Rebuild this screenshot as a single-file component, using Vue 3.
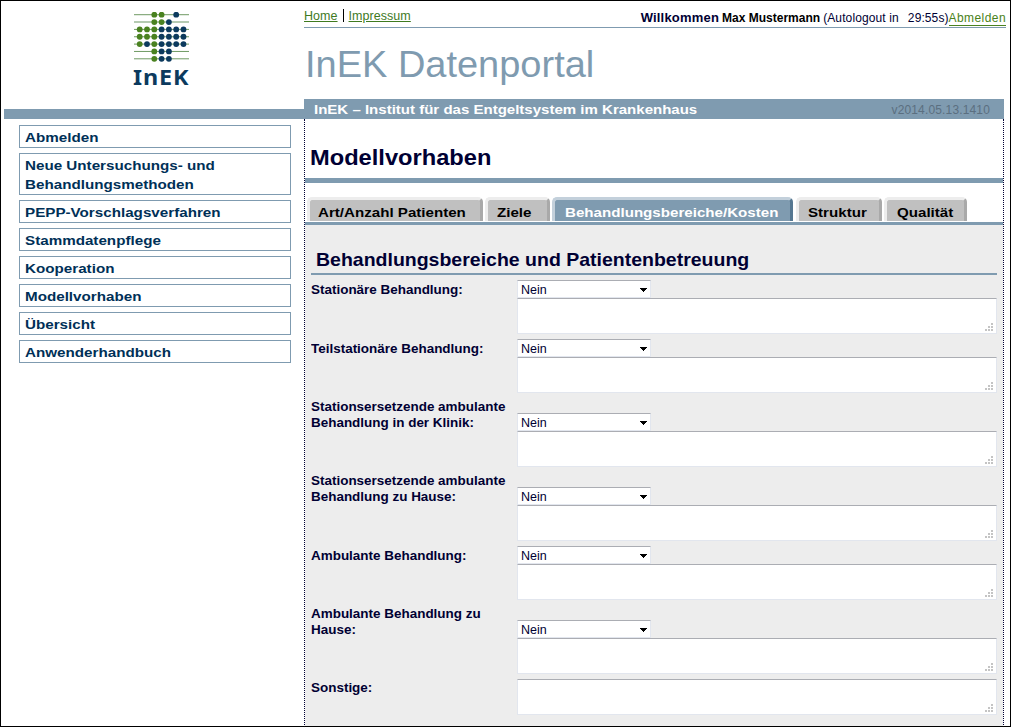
<script setup>
const menu = ['Abmelden', 'Neue Untersuchungs- und Behandlungsmethoden', 'PEPP-Vorschlagsverfahren', 'Stammdatenpflege', 'Kooperation', 'Modellvorhaben', 'Übersicht', 'Anwenderhandbuch']
const tabs = [
  { label: 'Art/Anzahl Patienten', cls: 't1' },
  { label: 'Ziele', cls: 't2' },
  { label: 'Behandlungsbereiche/Kosten', cls: 't3 active' },
  { label: 'Struktur', cls: 't4' },
  { label: 'Qualität', cls: 't5' }
]
const rows = [
  { lines: ['Stationäre Behandlung:'], select: true },
  { lines: ['Teilstationäre Behandlung:'], select: true },
  { lines: ['Stationsersetzende ambulante', 'Behandlung in der Klinik:'], select: true },
  { lines: ['Stationsersetzende ambulante', 'Behandlung zu Hause:'], select: true },
  { lines: ['Ambulante Behandlung:'], select: true },
  { lines: ['Ambulante Behandlung zu', 'Hause:'], select: true },
  { lines: ['Sonstige:'], select: false }
]
// g = green bead, b = blue bead, . = empty place on the line
const beads = ['..gg.b.', '..ggb..', 'gggbbbb', 'gggbbbb', 'gbgbbbb', '..gbb..', '..gbb..']
const grip = [[6, 0], [3, 3], [6, 3], [0, 6], [3, 6], [6, 6]]
</script>

<template>
  <div class="page">
    <aside class="side">
      <div class="logo">
        <svg width="56" height="50" viewBox="0 0 56 50">
          <g v-for="(row, r) in beads" :key="r">
            <rect x="0" :y="r === 1 ? 9 : 2.2 + r * 7.35" width="55" :height="r === 1 ? 2 : 1" :fill="r === 1 ? '#b5cbb2' : '#6f9a63'" />
            <template v-for="(c, i) in row" :key="i">
              <circle v-if="c !== '.'" :cx="5.7 + i * 7.3" :cy="2.7 + r * 7.35" r="2.9" :fill="c === 'g' ? '#4a8220' : '#0c3a5e'" />
            </template>
          </g>
        </svg>
        <span class="word">InEK</span>
      </div>
      <div class="bar"></div>
      <nav class="menu">
        <a v-for="m in menu" :key="m"><span class="wide">{{ m }}</span></a>
      </nav>
    </aside>

    <main class="main">
      <header class="top">
        <div class="links"><a>Home</a><i></i><a>Impressum</a></div>
        <div class="user"><b class="wel">Willkommen</b><b class="name">Max Mustermann</b><span class="auto">(Autologout in</span><span class="time">29:55s)</span><a class="out">Abmelden</a></div>
      </header>
      <div class="title"><span class="wide">InEK Datenportal</span></div>
      <div class="banner"><b class="wide">InEK – Institut für das Entgeltsystem im Krankenhaus</b><span class="version">v2014.05.13.1410</span></div>
      <section class="content">
        <h1><span class="wide">Modellvorhaben</span></h1>
        <div class="tabs">
          <div v-for="t in tabs" :key="t.label" class="tab" :class="t.cls"><span class="wide">{{ t.label }}</span></div>
        </div>
        <div class="panel">
          <h2><span class="wide">Behandlungsbereiche und Patientenbetreuung</span></h2>
          <div v-for="(r, k) in rows" :key="k" class="row">
            <div class="label" :class="{ single: r.select && r.lines.length === 1 }"><div v-for="l in r.lines" :key="l"><span class="wide">{{ l }}</span></div></div>
            <div class="fields" :class="{ low: r.lines.length > 1 }">
              <div v-if="r.select" class="select"><span>Nein</span>
                <svg width="7" height="4" viewBox="0 0 7 4" shape-rendering="crispEdges"><path d="M0 0H7V1H6V2H5V3H4V4H3V3H2V2H1V1H0Z" fill="#000" /></svg>
              </div>
              <div class="area">
                <svg width="8" height="8" viewBox="0 0 8 8" shape-rendering="crispEdges"><rect v-for="(g, i) in grip" :key="i" :x="g[0]" :y="g[1]" width="2" height="2" fill="#c4c4c4" /></svg>
              </div>
            </div>
          </div>
        </div>
      </section>
    </main>
  </div>
</template>

<style>
body { margin: 0; background: #fff; overflow: hidden; }
</style>

<style scoped>
* { box-sizing: border-box; }
.page { width: 1011px; height: 727px; border: 1px solid #000; display: flex; padding-left: 3px; overflow: hidden; font-family: "Liberation Sans", Arial, sans-serif; color: #000033; background: #fff; white-space: nowrap; }
.wide { display: block; width: max-content; transform-origin: 0 50%; }
.side { width: 300px; flex: none; }
.logo { height: 108px; padding: 11px 0 0 130px; }
.logo svg { display: block; }
.word { display: block; width: max-content; font: bold 20.5px/24px "Noto Sans", "Open Sans", sans-serif; color: #0c3a5e; margin: 3px 0 0 -1px; letter-spacing: .8px; transform: scaleX(1.14); transform-origin: 0 50%; }
.bar { height: 10px; background: #7f9bb0; }
.menu { display: flex; flex-direction: column; gap: 5px; margin: 6px 13px 0 15px; }
.menu a { border: 1px solid #7f9bb0; padding: 2px 5px 0; font-size: 13.5px; line-height: 19px; font-weight: bold; color: #003057; }
.menu .wide { max-width: 185px; white-space: normal; transform: scaleX(1.125); }
.main { width: 702px; flex: none; }
.top { height: 27px; border-bottom: 1px solid #7f9bb0; display: flex; justify-content: space-between; font-size: 12px; }
.links { display: flex; padding-top: 8px; line-height: 14px; }
.links a { color: #3f7a1f; text-decoration: underline; font-size: 12.5px; letter-spacing: .05px; }
.links i { width: 1px; height: 13px; background: #000; margin: 0 5px; }
.user { display: flex; padding-top: 10px; line-height: 14px; }
.wel { font-size: 13px; letter-spacing: .2px; margin-right: 3px; }
.name { color: #000; margin-right: 3px; }
.auto { letter-spacing: .12px; }
.time { margin-left: 9px; letter-spacing: .1px; }
.out { color: #4a8220; height: 15px; border-bottom: 1px solid #4a8220; letter-spacing: .42px; }
.title { height: 71px; padding: 16px 0 0 1px; font-size: 36px; line-height: 41px; color: #7f9bb0; }
.title .wide { transform: scaleX(1.055); }
.banner { width: 700px; height: 20px; background: #7f9bb0; display: flex; justify-content: space-between; line-height: 21px; padding: 0 14px 0 10px; font-size: 13.5px; }
.banner .wide { color: #fff; transform: scaleX(1.113); }
.version { color: #5b6f80; line-height: 22px; font-size: 12px; letter-spacing: .15px; }
.content { width: 700px; height: 608px; border: dotted #000033; border-width: 0 1px; }
h1 { margin: 0; height: 64px; border-bottom: 5px solid #7f9bb0; padding: 25px 0 0 5px; font-size: 22px; line-height: 28px; }
h1 .wide { transform: scaleX(1.075); }
.tabs { display: flex; margin-top: 14px; height: 24px; padding-left: 2px; gap: 2px; }
.tab { height: 24px; border: solid #ededed; border-width: 3px 3px 0 3px; border-right-color: #a9a9a9; border-radius: 5px 5px 0 0; background: #c0c0c0; color: #000; font-weight: bold; font-size: 13.5px; line-height: 20px; padding: 3px 0 0 8px; overflow: hidden; }
.tab .wide { transform: scaleX(1.12); }
.t1 { width: 176px; }
.t2 { width: 65px; padding-left: 9px; }
.t3 { width: 241px; padding-left: 10px; }
.t4 { width: 86px; margin-left: 1px; padding-left: 9px; }
.t5 { width: 83px; padding-left: 10px; }
.tab.active { background: #7f9bb0; border-color: #c3d0db; border-right-color: #557791; color: #fff; }
.panel { margin-top: 1px; border-top: 3px solid #7f9bb0; background: #ededed; height: 504px; padding: 0 6px; overflow: hidden; }
h2 { margin: 0 0 5px; height: 50px; border-bottom: 2px solid #7f9bb0; padding: 23px 0 0 5px; font-size: 19px; line-height: 24px; }
h2 .wide { transform: scaleX(1.026); }
.row { display: flex; margin-bottom: 5px; }
.label { width: 206px; padding-top: 1px; font-size: 13px; line-height: 16px; font-weight: bold; }
.label.single { padding-top: 2px; }
.label .wide { transform: scaleX(1.035); }
.fields { width: 480px; }
.low { padding-top: 15px; }
.select { width: 134px; height: 18px; border: 1px solid #e2e6ee; border-top-color: #abadb3; background: #fff; display: flex; justify-content: space-between; align-items: center; padding: 1px 3px 0 3px; font-size: 12.5px; line-height: 16px; }
.area { height: 36px; border: 1px solid #e2e6ee; border-top-color: #abadb3; background: #fff; display: flex; justify-content: flex-end; align-items: flex-end; padding: 0 3px 2px; }
</style>
